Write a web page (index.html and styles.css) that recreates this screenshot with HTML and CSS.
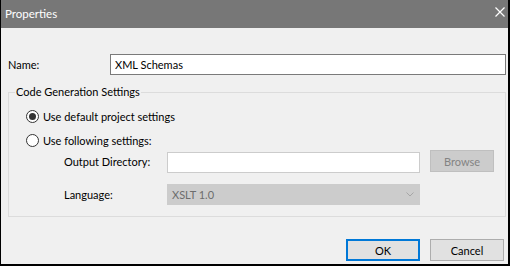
FILE: index.html
```html
<!DOCTYPE html>
<html>
<head>
    <title>Properties</title>
    <link rel="stylesheet" href="styles.css">
</head>
<body>
    <div class="dialog">
        <!-- Title bar -->
        <div class="titlebar">
            <span class="title">Properties</span>
            <svg class="close" width="10" height="10" viewBox="0 0 10 10">
                <path d="M0.5 0.5 L9.5 9.5 M9.5 0.5 L0.5 9.5" stroke="#fff" stroke-width="1.2" fill="none"/>
            </svg>
        </div>

        <div class="content">
            <div class="name-row">
                <label class="name-label" for="name">Name:</label>
                <input class="name-input" id="name" type="text" value="XML Schemas">
            </div>

            <fieldset class="group">
                <legend>Code Generation Settings</legend>

                <div class="radio-row">
                    <span class="radio checked"></span>
                    <span>Use default project settings</span>
                </div>
                <div class="radio-row">
                    <span class="radio"></span>
                    <span>Use following settings:</span>
                </div>

                <div class="field-row dir-row">
                    <span class="field-label">Output Directory:</span>
                    <span class="text-box"></span>
                    <span class="btn browse">Browse</span>
                </div>
                <div class="field-row">
                    <span class="field-label">Language:</span>
                    <span class="select">
                        <span>XSLT 1.0</span>
                        <svg width="8" height="5" viewBox="0 0 8 5">
                            <path d="M0.5 0.5 L4 4 L7.5 0.5" stroke="#a6a6a6" fill="none"/>
                        </svg>
                    </span>
                </div>
            </fieldset>

            <div class="buttons">
                <span class="btn ok">OK</span>
                <span class="btn">Cancel</span>
            </div>
        </div>
    </div>
</body>
</html>
```

FILE: styles.css
```css
body {
    margin: 0;
    padding: 0;
    font-family: Lato, "Noto Sans", sans-serif;
    font-size: 11px;
    color: #000;
}

.dialog {
    width: 510px;
    height: 266px;
    box-sizing: border-box;
    background-color: #f0f0f0;
    border-left: 1px solid #000;
    border-right: 2px solid #000;
    border-bottom: 2px solid #000;
    display: flex;
    flex-direction: column;
}

/* Title bar */
.titlebar {
    height: 28px;
    background-color: #777;
    color: #fff;
    display: flex;
    align-items: center;
    justify-content: space-between;
    padding: 0 3px 0 4px;
    flex-shrink: 0;
}

.title {
    font-size: 11.5px;
    margin-top: -2px;
}

.close {
    margin-top: -4px;
}

.content {
    padding: 0 2px 0 7px;
    display: flex;
    flex-direction: column;
}

/* Name */
.name-row {
    display: flex;
    align-items: center;
    margin-top: 26px;
}

.name-label {
    width: 102px;
}

.name-input {
    flex: 1;
    height: 21px;
    box-sizing: border-box;
    border: 1px solid #7a7a7a;
    background: #fff;
    font-family: inherit;
    font-size: 11px;
    padding: 0 0 0 4px;
    margin: 0;
    outline: none;
}

/* Group box */
.group {
    margin: 9px 0 0 0;
    padding: 0 0 11px 0;
    border: 1px solid #dcdcdc;
    min-width: 0;
}

.group legend {
    margin-left: 6px;
    padding: 0 1px;
    line-height: 16px;
}

.radio-row {
    display: flex;
    align-items: center;
    height: 16px;
    padding-left: 17px;
    margin-top: 8px;
}

.radio {
    width: 13px;
    height: 13px;
    box-sizing: border-box;
    border: 1px solid #333;
    border-radius: 50%;
    background: #fff;
    margin-right: 4px;
    position: relative;
}

.radio.checked::after {
    content: "";
    position: absolute;
    left: 2px;
    top: 2px;
    width: 7px;
    height: 7px;
    border-radius: 50%;
    background: #333;
}

.field-row {
    display: flex;
    align-items: center;
    padding-left: 55px;
    margin-top: 11px;
}

.dir-row {
    margin-top: 2px;
    align-items: flex-start;
}

.dir-row .field-label {
    margin-top: 5px;
}

.field-label {
    width: 103px;
}

.text-box {
    width: 253px;
    height: 21px;
    box-sizing: border-box;
    border: 1px solid #cccccc;
    background: #fff;
    margin-top: 2px;
}

.select {
    width: 253px;
    height: 21px;
    box-sizing: border-box;
    border: 1px solid #cccccc;
    background: #cccccc;
    color: #6d6d6d;
    display: flex;
    align-items: center;
    justify-content: space-between;
    padding: 0 5px 0 4px;
}

/* Buttons */
.btn {
    display: flex;
    align-items: center;
    justify-content: center;
    box-sizing: border-box;
    width: 74px;
    height: 22px;
    border: 1px solid #adadad;
    background: #e1e1e1;
}

.browse {
    width: 64px;
    margin-left: 10px;
    background: #cccccc;
    border-color: #bfbfbf;
    color: #838383;
}

.ok {
    border: 2px solid #0078d7;
}

.buttons {
    display: flex;
    justify-content: flex-end;
    gap: 10px;
    margin-top: 22px;
    padding-right: 2px;
}
```
